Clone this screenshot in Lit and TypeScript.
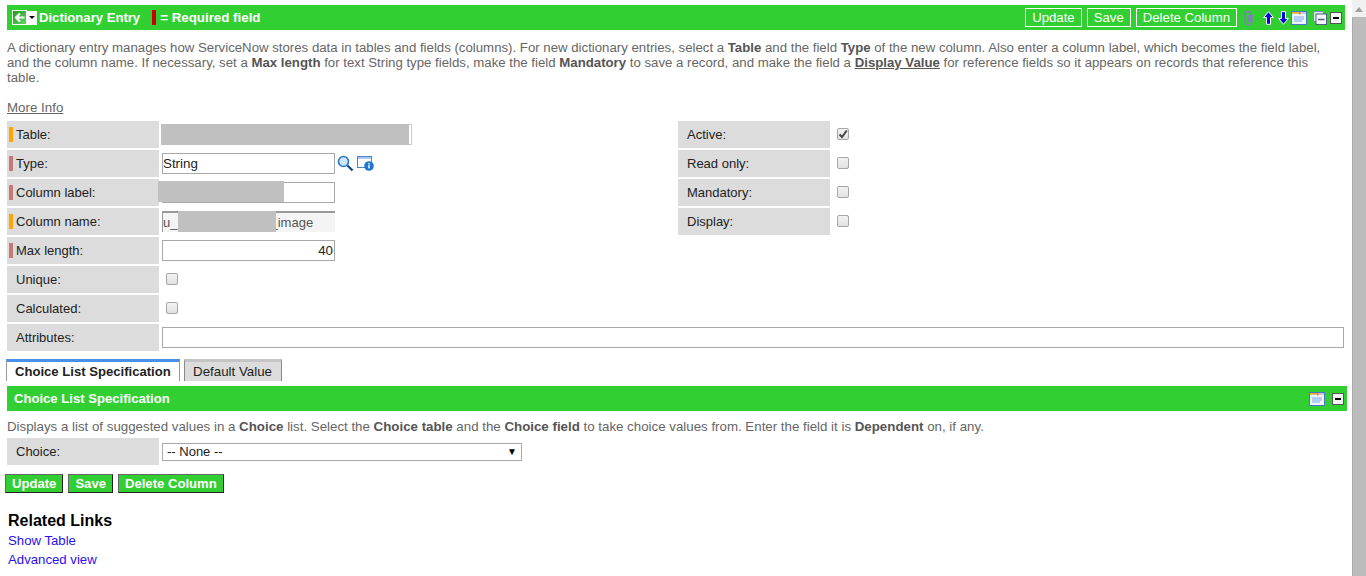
import { LitElement, html, css, svg } from "lit";
import { customElement } from "lit/decorators.js";

const listIcon = svg`<svg class="ic" width="16" height="14" viewBox="0 0 16 14"><rect x=".5" y=".5" width="15" height="13" fill="#eef4fc" stroke="#4a76c8"/><rect x="1" y="1" width="14" height="2" fill="#c8c8d0"/><rect x="1" y="1" width="7" height="1.5" fill="#f5b030"/><rect x="8" y="1" width="1.5" height="2.5" fill="#f08020"/><path d="M3 6h10M3 8h10M3 10h8" stroke="#7fa4e8" stroke-width="1"/></svg>`;
const minusIcon = html`<span class="minus"><span></span></span>`;

@customElement("app-root")
export class AppRoot extends LitElement {
  static styles = css`
    :host { display: block; height: 576px; overflow: hidden; font-family: "Liberation Sans", Arial, sans-serif; font-size: 13.33px; color: #222; background: #fff; }
    .shell { display: flex; height: 576px; }
    .page { width: 1352px; flex: none; padding: 5px 0 0 7px; box-sizing: border-box; white-space: nowrap; }
    .sb { width: 14px; flex: none; background: #f1f1f1; display: flex; flex-direction: column; align-items: center; }
    .sb i { display: block; width: 0; height: 0; margin: 7px 0 5px; border: 4px solid transparent; border-top: 0; border-bottom: 5px solid #a0a0a0; }
    .sb b { display: block; width: 14px; flex: 1; background: #bcbcbc; border-left: 1px solid #aaa; box-sizing: border-box; }
    .bar { height: 25px; width: 1338px; background: #32cf32; color: #fff; font-weight: bold; display: flex; align-items: center; box-sizing: border-box; font-size: 13.1px; }
    .bar .title { margin-left: 2px; }
    .back { margin-left: 5px; width: 13px; height: 13px; background: linear-gradient(135deg,#1f9a1f,#5fd85f); border: 1px solid #fff; display: flex; }
    .drop { width: 10px; height: 14px; background: #fff; display: flex; align-items: center; justify-content: center; }
    .drop span { width: 0; height: 0; border: 3px solid transparent; border-bottom: 0; border-top: 3px solid #000; }
    .req { width: 4px; height: 15px; background: #c80000; margin-left: 12px; margin-right: 4px; }
    .req-text { font-size: 13.33px; }
    .spacer { flex: 1; }
    .hbtn { height: 19px; box-sizing: border-box; border: 1px solid #fff; color: #fff; font: 13.2px "Liberation Sans", Arial, sans-serif; padding: 0 6px; display: flex; align-items: center; margin-left: 5px; }
    .ic { display: block; flex: none; }
    .minus { width: 10px; height: 10px; background: #f4f4f4; border: 1px solid #555; display: flex; align-items: center; justify-content: center; flex: none; }
    .minus span { width: 6px; height: 2px; background: #000; }
    .intro { margin: 10px 0 0 0; line-height: 15px; color: #666; font-size: 13.22px; }
    .intro b { color: #555; }
    .intro u { color: #555; }
    .more { margin-top: 15px; height: 16px; line-height: 16px; color: #666; text-decoration: underline; }
    .form { margin-top: 5px; display: grid; grid-template-columns: 671px 1fr; }
    .col { display: flex; flex-direction: column; gap: 2px; }
    .row { display: flex; height: 27px; align-items: center; position: relative; }
    .attr { grid-column: 1 / 3; margin-top: 2px; }
    .label { width: 152px; height: 27px; background: #dcdcdc; flex: none; display: flex; align-items: center; padding-left: 9px; box-sizing: border-box; color: #222; font-size: 13px; }
    .mark { width: 4px; height: 15px; margin-left: -7px; margin-right: 3px; flex: none; }
    .o { background: #ffa500; } .r { background: #c87878; }
    .input { margin-left: 3px; height: 21px; box-sizing: border-box; border: 1px solid #a8a8a8; background: #fff; display: flex; align-items: center; padding: 0 1px 0 0; color: #222; flex: none; }
    .w173 { width: 173px; }
    .ro { border: 0; border-top: 2px solid #999; border-left: 1px solid #999; background: #f4f4f4; color: #555; font-size: 13px; }
    .gap { width: 93px; flex: none; }
    .right { justify-content: flex-end; }
    .wide { width: 1182px; }
    .cb { width: 12px; height: 12px; box-sizing: border-box; border: 1px solid #a6a6a6; border-radius: 2px; background: linear-gradient(#f2f2f2,#e2e2e2); margin: 0 0 2px 7px; display: flex; flex: none; }
    .red { position: absolute; background: #c0c0c0; }
    .r-table { left: 154px; top: 3px; width: 248px; height: 21px; }
    .r-label { left: 151px; top: 2px; width: 126px; height: 21px; }
    .r-name { left: 171px; top: 3px; width: 98px; height: 21px; }
    .tall { width: 250px; border-color: #ccc; }
    .tabs { display: flex; margin-top: 8px; height: 22px; align-items: flex-end; }
    .tab { box-sizing: border-box; display: flex; align-items: center; padding: 0 8px; flex: none; }
    .t1 { width: 174px; height: 22px; margin-left: -1px; border-top: 3px solid #4a90e8; border-left: 1px solid #999; border-right: 1px solid #999; font-weight: bold; font-size: 13.1px; background: #fff; }
    .t2 { width: 98px; height: 22px; margin-left: 4px; border-top: 3px solid #c4c4c4; border-left: 1px solid #888; border-right: 1px solid #888; background: #dcdcdc; }
    .sec { margin-top: 5px; width: 1340px; }
    .sec .title { margin-left: 7px; }
    .desc { margin-top: 8px; height: 15px; line-height: 15px; color: #666; font-size: 13.3px; }
    .desc b { color: #555; }
    .choice { margin-top: 4px; }
    .select { width: 360px; height: 18px; position: relative; padding: 0 4px; justify-content: space-between; font-size: 13px; }
    .select span + span { font-size: 10px; color: #000; margin-right: 0; }
    .btns { display: flex; gap: 5px; margin: 9px 0 0 -2px; }
    .gbtn { height: 19px; box-sizing: border-box; background: #32cf32; border: 1px solid #222; border-color: #666 #222 #222 #666; color: #fff; font-weight: bold; font-size: 13.1px; padding: 0 6px; display: flex; align-items: center; }
    h3 { margin: 19px 0 0 1px; font-size: 16px; line-height: 18px; font-weight: bold; color: #000; }
    .links { margin: 1px 0 0 1px; display: flex; flex-direction: column; font-size: 13.2px; }
    .links a { color: #2a10f0; line-height: 19px; height: 19px; text-decoration: none; }
    .m7 { margin-left: 7px; } .m9 { margin-left: 9px; } .m4 { margin-left: 4px; } .m2 { margin-left: 2px; } .m3 { margin-left: 3px; } .m6 { margin-left: 6px; }
    .mr3 { margin-right: 3px; }
  `;

  private left(name: string, mark: string, body: unknown) {
    return html`<div class="row"><div class="label">${mark ? html`<span class="mark ${mark}"></span>` : ""}${name}</div>${body}</div>`;
  }
  private chk(name: string, on = false) {
    return html`<div class="row"><div class="label">${name}</div><span class="cb">${on ? html`<svg width="10" height="10" viewBox="0 0 10 10"><path d="M1.5 5.5 4 8 8.8 1.5" fill="none" stroke="#444" stroke-width="2"/></svg>` : ""}</span></div>`;
  }

  render() {
    return html`<div class="shell"><div class="page">
      <div class="bar">
        <span class="back"><svg width="13" height="13" viewBox="0 0 13 13"><path d="M11.5 6.5H3.5M7 2.5l-4 4 4 4" fill="none" stroke="#fff" stroke-width="2.2"/></svg></span>
        <span class="drop"><span></span></span>
        <span class="title">Dictionary Entry</span>
        <span class="req"></span><span class="req-text">= Required field</span>
        <span class="spacer"></span>
        <span class="hbtn">Update</span><span class="hbtn">Save</span><span class="hbtn">Delete Column</span>
        <svg class="ic m6" width="11" height="16" viewBox="0 0 11 16"><path d="M9 4.5v7a3.5 3.5 0 0 1-7 0V4a2.6 2.6 0 0 1 5.2 0V11a1 1 0 0 1-2 0V5" fill="none" stroke="#7888ac" stroke-width="1.6"/></svg>
        <svg class="ic m9" width="11" height="14" viewBox="0 0 11 14"><path d="M5.5.7 10.3 6.5H7.5v6.8h-4V6.5H.7z" fill="#0000e0" stroke="#fff"/></svg>
        <svg class="ic m4" width="11" height="14" viewBox="0 0 11 14"><path d="M5.5 13.3 10.3 7.5H7.5V.7h-4v6.8H.7z" fill="#0000e0" stroke="#fff"/></svg>
        <span class="m2">${listIcon}</span>
        <svg class="ic m6" width="14" height="14" viewBox="0 0 14 14"><rect x=".5" y=".5" width="10" height="10" fill="#dfe7f2" stroke="#7a8ca8"/><rect x="3" y="3" width="10.5" height="10.5" fill="#f2f6fb" stroke="#50607a"/><path d="M5 8.5h6.5" stroke="#50607a" stroke-width="1.5"/></svg>
        <span class="m3 mr3">${minusIcon}</span>
      </div>
      <div class="intro">A dictionary entry manages how ServiceNow stores data in tables and fields (columns). For new dictionary entries, select a <b>Table</b> and the field <b>Type</b> of the new column. Also enter a column label, which becomes the field label,<br>and the column name. If necessary, set a <b>Max length</b> for text String type fields, make the field <b>Mandatory</b> to save a record, and make the field a <b><u>Display Value</u></b> for reference fields so it appears on records that reference this<br>table.</div>
      <div class="more">More Info</div>
      <div class="form">
        <div class="col">
          ${this.left("Table:", "o", html`<span class="input tall"></span><span class="red r-table"></span>`)}
          ${this.left("Type:", "r", html`<span class="input w173">String</span>
            <svg class="ic m2" width="17" height="17" viewBox="0 0 17 17"><circle cx="6.5" cy="6.5" r="5" fill="#cfe6fa" stroke="#2a78c0" stroke-width="1.6"/><path d="m10.5 10.5 5 5" stroke="#1d4f86" stroke-width="2.4"/></svg>
            <svg class="ic m3" width="17" height="15" viewBox="0 0 17 15"><rect x=".5" y=".5" width="14" height="11" fill="#fff" stroke="#4a86c8"/><rect x="1" y="1" width="13" height="2" fill="#a8c8ec"/><circle cx="12" cy="10" r="4.8" fill="#1f78d0"/><rect x="11.3" y="8.8" width="1.4" height="3.6" fill="#fff"/><rect x="11.3" y="7" width="1.4" height="1.2" fill="#fff"/></svg>`)}
          ${this.left("Column label:", "r", html`<span class="input w173"></span><span class="red r-label"></span>`)}
          ${this.left("Column name:", "o", html`<span class="input w173 ro">u_<span class="gap"></span>_image</span><span class="red r-name"></span>`)}
          ${this.left("Max length:", "r", html`<span class="input w173 right">40</span>`)}
          ${this.left("Unique:", "", html`<span class="cb"></span>`)}
          ${this.left("Calculated:", "", html`<span class="cb"></span>`)}
        </div>
        <div class="col">
          ${this.chk("Active:", true)}
          ${this.chk("Read only:")}
          ${this.chk("Mandatory:")}
          ${this.chk("Display:")}
        </div>
        <div class="attr">${this.left("Attributes:", "", html`<span class="input wide"></span>`)}</div>
      </div>
      <div class="tabs"><span class="tab t1">Choice List Specification</span><span class="tab t2">Default Value</span></div>
      <div class="bar sec"><span class="title">Choice List Specification</span><span class="spacer"></span>${listIcon}<span class="m7 mr3">${minusIcon}</span></div>
      <div class="desc">Displays a list of suggested values in a <b>Choice</b> list. Select the <b>Choice table</b> and the <b>Choice field</b> to take choice values from. Enter the field it is <b>Dependent</b> on, if any.</div>
      <div class="choice">${this.left("Choice:", "", html`<span class="input select"><span>-- None --</span><span>▼</span></span>`)}</div>
      <div class="btns"><span class="gbtn">Update</span><span class="gbtn">Save</span><span class="gbtn">Delete Column</span></div>
      <h3>Related Links</h3>
      <div class="links"><a>Show Table</a><a>Advanced view</a></div>
    </div><div class="sb"><i></i><b></b></div></div>`;
  }
}
